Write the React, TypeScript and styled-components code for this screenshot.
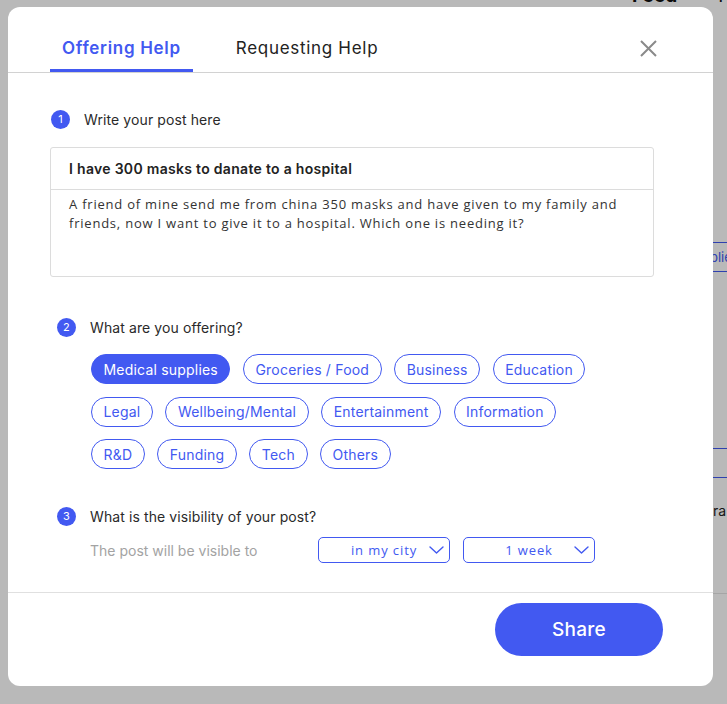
import styled, { createGlobalStyle } from "styled-components";

const BLUE = "#4259f1";
const SANS = `Inter, "Noto Sans", "Liberation Sans", sans-serif`;
const BODY = `"Open Sans", "Noto Sans", "Liberation Sans", sans-serif`;

const GlobalStyle = createGlobalStyle`
    html, body {
        margin: 0;
        padding: 0;
    }
    body {
        font-family: ${SANS};
        background: #fff;
    }
    * {
        box-sizing: border-box;
    }
`

// page behind the dialog
const Page = styled.div`
    position: relative;
    width: 727px;
    height: 704px;
    overflow: hidden;
    background: #fff;
`
const BackTop = styled.header`
    display: flex;
    gap: 41px;
    margin-top: -14px;
    padding-left: 632px;
    height: 20px;
    font: 700 19px/20px ${SANS};
    color: #111;
    white-space: nowrap;
    span + span {
        font-weight: 400;
    }
`
const BackSide = styled.div`
    display: flex;
    flex-direction: column;
    padding-left: 686px;
    margin-top: 236px;
    white-space: nowrap;
`
const SideTab = styled.div<{ $top: number }>`
    margin-top: ${p => p.$top}px;
    height: 30px;
    border-top: 1px solid ${BLUE};
    border-bottom: 1px solid ${BLUE};
    display: flex;
    align-items: center;
    font-size: 13px;
    color: ${BLUE};
`
const SideText = styled.div`
    margin: 24px 0 0 6px;
    font-size: 14px;
    line-height: 18px;
    color: #222;
`
const SideRule = styled.div`
    margin-top: 73px;
    margin-left: -200px;
    height: 1px;
    background: #e4e4e4;
`

// dialog
const Overlay = styled.div`
    position: absolute;
    inset: 0;
    background: rgba(0, 0, 0, 0.275);
    padding: 7px 0 0 8px;
`
const Modal = styled.div`
    width: 705px;
    height: 679px;
    background: #fff;
    border-radius: 12px;
    display: flex;
    flex-direction: column;
`
const TabBar = styled.div`
    display: flex;
    height: 66px;
    padding: 0 56px 0 42px;
    border-bottom: 1px solid #d2d2d2;
`
const Tab = styled.div<{ $active?: boolean }>`
    padding: 30px 12px 0;
    font-size: 17px;
    line-height: 22px;
    letter-spacing: 0.7px;
    font-weight: ${p => (p.$active ? 600 : 400)};
    color: ${p => (p.$active ? BLUE : "#222")};
    border-bottom: 3px solid ${p => (p.$active ? BLUE : "transparent")};
    & + & {
        margin-left: 31px;
    }
`
const Close = styled.button`
    margin-left: auto;
    margin-top: 33px;
    width: 17px;
    height: 17px;
    padding: 0;
    border: none;
    background: none;
    display: flex;
`
const Body = styled.div`
    flex: 1;
    display: flex;
    flex-direction: column;
    padding: 36px 0 0 42px;
`
const StepHead = styled.div<{ $indent: number; $top: number }>`
    display: flex;
    align-items: center;
    gap: 14px;
    height: 20px;
    margin: ${p => p.$top}px 0 0 ${p => p.$indent}px;
    font-size: 14px;
    letter-spacing: 0.1px;
    color: #2a2a2a;
`
const StepNum = styled.span`
    width: 19px;
    height: 19px;
    border-radius: 50%;
    background: ${BLUE};
    color: #fff;
    font-size: 11px;
    display: flex;
    align-items: center;
    justify-content: center;
`
const PostBox = styled.div`
    margin-top: 18px;
    width: 604px;
    height: 130px;
    border: 1px solid #dcdcdc;
    border-radius: 3px;
`
const PostTitle = styled.div`
    height: 42px;
    padding: 0 18px;
    display: flex;
    align-items: center;
    border-bottom: 1px solid #dcdcdc;
    font-size: 14px;
    letter-spacing: 0.3px;
    font-weight: 600;
    color: #222;
`
const PostText = styled.div`
    padding: 5px 18px;
    font: 13px/19px ${BODY};
    letter-spacing: 0.78px;
    color: #333;
`
const ChipRows = styled.div`
    margin-top: 17px;
    padding-left: 41px;
    display: flex;
    flex-direction: column;
    gap: 12.5px;
`
const ChipRow = styled.div`
    display: flex;
    gap: 12.5px;
`
const Chip = styled.button<{ $active?: boolean }>`
    height: 30px;
    padding: 0 11.5px;
    border: 1.5px solid ${BLUE};
    border-radius: 15px;
    background: ${p => (p.$active ? BLUE : "#fff")};
    color: ${p => (p.$active ? "#fff" : BLUE)};
    font: 14px ${SANS};
    letter-spacing: 0.2px;
    white-space: nowrap;
`
const VisRow = styled.div`
    margin-top: 11px;
    padding-left: 40px;
    display: flex;
    align-items: center;
`
const Hint = styled.span`
    width: 228px;
    font-size: 14px;
    color: #a3a3a3;
`
const Select = styled.div`
    width: 132px;
    height: 26px;
    border: 1.5px solid ${BLUE};
    border-radius: 5px;
    display: flex;
    align-items: center;
    padding: 0 5px 0 20px;
    & + & {
        margin-left: 13px;
    }
`
const SelectValue = styled.span`
    flex: 1;
    text-align: center;
    font: 13px ${BODY};
    letter-spacing: 0.9px;
    color: ${BLUE};
`
const Footer = styled.div`
    border-top: 1px solid #e0e0e0;
    padding: 10px 50px 30px 0;
    display: flex;
    justify-content: flex-end;
`
const ShareButton = styled.button`
    width: 168px;
    height: 53px;
    border: none;
    border-radius: 27px;
    background: ${BLUE};
    color: #fff;
    font: 500 19px ${SANS};
    letter-spacing: 0.3px;
`

const chipRows = [
    ["Medical supplies", "Groceries / Food", "Business", "Education"],
    ["Legal", "Wellbeing/Mental", "Entertainment", "Information"],
    ["R&D", "Funding", "Tech", "Others"],
];

const Chevron = () => (
    <svg width="15" height="8" viewBox="0 0 15 8" fill="none">
        <path d="M1 1l6.5 6L14 1" stroke={BLUE} strokeWidth="1.4" strokeLinecap="round" strokeLinejoin="round" />
    </svg>
);

export default function App() {
    return (
        <Page>
            <GlobalStyle />
            <BackTop>
                <span>Feed</span>
                <span>H</span>
            </BackTop>
            <BackSide>
                <SideTab $top={0}>Supplies</SideTab>
                <SideTab $top={176} />
                <SideText>Extra</SideText>
                <SideRule />
            </BackSide>

            <Overlay>
                <Modal>
                    <TabBar>
                        <Tab $active>Offering Help</Tab>
                        <Tab>Requesting Help</Tab>
                        <Close aria-label="close">
                            <svg width="17" height="17" viewBox="0 0 17 17">
                                <path d="M1 1l15 15M16 1L1 16" stroke="#8a8a8a" strokeWidth="2" />
                            </svg>
                        </Close>
                    </TabBar>

                    <Body>
                        <StepHead $indent={1} $top={0}>
                            <StepNum>1</StepNum>
                            Write your post here
                        </StepHead>
                        <PostBox>
                            <PostTitle>I have 300 masks to danate to a hospital</PostTitle>
                            <PostText>
                                A friend of mine send me from china 350 masks and have given to my family and
                                friends, now I want to give it to a hospital. Which one is needing it?
                            </PostText>
                        </PostBox>

                        <StepHead $indent={7} $top={40}>
                            <StepNum>2</StepNum>
                            What are you offering?
                        </StepHead>
                        <ChipRows>
                            {chipRows.map((row, i) => (
                                <ChipRow key={i}>
                                    {row.map(label => (
                                        <Chip key={label} $active={label === "Medical supplies"}>{label}</Chip>
                                    ))}
                                </ChipRow>
                            ))}
                        </ChipRows>

                        <StepHead $indent={7} $top={37}>
                            <StepNum>3</StepNum>
                            What is the visibility of your post?
                        </StepHead>
                        <VisRow>
                            <Hint>The post will be visible to</Hint>
                            <Select>
                                <SelectValue>in my city</SelectValue>
                                <Chevron />
                            </Select>
                            <Select>
                                <SelectValue>1 week</SelectValue>
                                <Chevron />
                            </Select>
                        </VisRow>
                    </Body>

                    <Footer>
                        <ShareButton>Share</ShareButton>
                    </Footer>
                </Modal>
            </Overlay>
        </Page>
    );
}
